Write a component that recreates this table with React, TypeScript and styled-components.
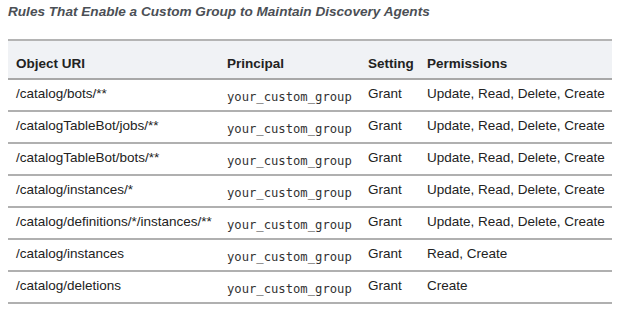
import { FC } from "react"
import styled, { createGlobalStyle } from "styled-components"

const GlobalStyle = createGlobalStyle`
  body {
    margin: 0;
    background: #ffffff;
    font-family: "Liberation Sans", Arial, sans-serif;
  }
`

type Rule = {
  uri: string
  setting: string
  permissions: string
}

const rules: Rule[] = [
  { uri: "/catalog/bots/**", setting: "Grant", permissions: "Update, Read, Delete, Create" },
  { uri: "/catalogTableBot/jobs/**", setting: "Grant", permissions: "Update, Read, Delete, Create" },
  { uri: "/catalogTableBot/bots/**", setting: "Grant", permissions: "Update, Read, Delete, Create" },
  { uri: "/catalog/instances/*", setting: "Grant", permissions: "Update, Read, Delete, Create" },
  { uri: "/catalog/definitions/*/instances/**", setting: "Grant", permissions: "Update, Read, Delete, Create" },
  { uri: "/catalog/instances", setting: "Grant", permissions: "Read, Create" },
  { uri: "/catalog/deletions", setting: "Grant", permissions: "Create" },
]

const Page = styled.div`
  padding: 4px 0 0 8px;
`

const Caption = styled.div`
  font-size: 13.6px;
  line-height: 16px;
  font-weight: bold;
  font-style: italic;
  color: #4b4f55;
  margin-bottom: 19px;
`

const Table = styled.table`
  width: 604px;
  table-layout: fixed;
  border-collapse: collapse;
  font-size: 13.5px;
  line-height: 16px;
  color: #222;
`

const HeadRow = styled.tr`
  background: #f0f2f5;
  border-top: 2px solid #b4b4b4;
  border-bottom: 2px solid #a8a8a8;
`

const Th = styled.th<{ $width: number }>`
  box-sizing: border-box;
  text-align: left;
  font-weight: bold;
  padding: 15px 8px 6px;
  width: ${({ $width }) => `${$width}px`};
  white-space: nowrap;
`

const Row = styled.tr`
  border-bottom: 2px solid #b0b0b0;
`

const Td = styled.td`
  padding: 6px 8px 8px;
  white-space: nowrap;
  vertical-align: baseline;
`

const Code = styled.code`
  font-family: "DejaVu Sans Mono", "Liberation Mono", monospace;
  font-size: 12.2px;
  color: #333;
  position: relative;
  top: 3px;
`

const App: FC = () => (
  <Page>
    <GlobalStyle />
    <Caption>Rules That Enable a Custom Group to Maintain Discovery Agents</Caption>
    <Table>
      <thead>
        <HeadRow>
          <Th $width={211}>Object URI</Th>
          <Th $width={141}>Principal</Th>
          <Th $width={59}>Setting</Th>
          <Th $width={193}>Permissions</Th>
        </HeadRow>
      </thead>
      <tbody>
        {rules.map((r) => (
          <Row key={r.uri}>
            <Td>{r.uri}</Td>
            <Td>
              <Code>your_custom_group</Code>
            </Td>
            <Td>{r.setting}</Td>
            <Td>{r.permissions}</Td>
          </Row>
        ))}
      </tbody>
    </Table>
  </Page>
)

export default App
